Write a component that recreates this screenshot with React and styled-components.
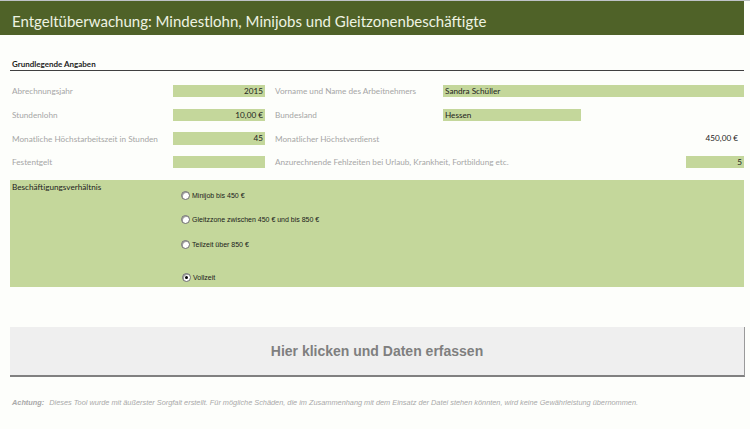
import React from "react";
import styled, { createGlobalStyle } from "styled-components";

const Global = createGlobalStyle`
  html, body { margin: 0; padding: 0; background: #fdfefb; }
  body { font-family: Lato, "Open Sans", sans-serif; }
  * { box-sizing: border-box; }
`;

const Page = styled.div`
  width: 750px;
  height: 429px;
  overflow: hidden;
  border-top: 1px solid #bfc3c8;
`;

const Header = styled.header`
  height: 34px;
  margin-right: 6px;
  background: #4f6228;
  display: flex;
  align-items: flex-end;
  padding: 0 0 5px 12px;
`;

const Title = styled.h1`
  margin: 0;
  font-family: Lato, sans-serif;
  font-weight: 400;
  font-size: 15px;
  line-height: 18px;
  color: #eef3e2;
`;

const Body = styled.main`
  padding: 0 6px 0 10px;
`;

const SectionTitle = styled.div`
  margin-top: 25px;
  height: 11px;
  border-bottom: 1px solid #404040;
  padding-left: 2px;
  font-size: 8px;
  font-weight: 700;
  line-height: 9px;
  color: #1e1e1e;
`;

const FormGrid = styled.div`
  margin-top: 14px;
  display: grid;
  grid-template-columns: 163px 92px 178px 1fr;
  grid-auto-rows: 12.3px;
  row-gap: 11.4px;
  column-gap: 0;
  align-items: center;
`;

const Label = styled.div`
  padding-left: ${(p) => (p.$indent ? "0" : "2px")};
  margin-left: ${(p) => (p.$indent ? "10px" : "0")};
  font-size: 8.2px;
  line-height: 12px;
  color: #a6a6a6;
  white-space: nowrap;
`;

const Field = styled.div`
  height: 12.3px;
  width: ${(p) => p.$width || "auto"};
  justify-self: ${(p) => (p.$end ? "end" : "stretch")};
  background: ${(p) => (p.$plain ? "transparent" : "#c4d79b")};
  text-align: ${(p) => p.$align || "left"};
  padding: 0 ${(p) => p.$padR || "2px"} 0 2px;
  font-size: 8.2px;
  line-height: 12.3px;
  color: #1d1d1d;
  white-space: nowrap;
`;

const Choice = styled.section`
  margin-top: 12px;
  height: 107px;
  background: #c4d79b;
  display: grid;
  grid-template-columns: 171px 1fr;
`;

const ChoiceLabel = styled.div`
  padding: 2px 0 0 2px;
  font-size: 8.2px;
  line-height: 10px;
  color: #1e1e1e;
`;

const RadioList = styled.div`
  display: flex;
  flex-direction: column;
  padding-top: 10px;
`;

const RadioItem = styled.label`
  display: flex;
  align-items: center;
  height: 10px;
  margin-top: ${(p) => p.$space || 0}px;
  margin-left: ${(p) => p.$shift || 0}px;
  font-family: "Liberation Sans", Arial, sans-serif;
  font-size: 7px;
  color: #1a1a1a;
  gap: 2px;
`;

const RadioDot = styled.span`
  width: 9px;
  height: 9px;
  border-radius: 50%;
  background: #ffffff;
  border: 1px solid #6d6d6d;
  box-shadow: inset 1px 1px 0 #a0a0a0;
  display: flex;
  align-items: center;
  justify-content: center;
  &::after {
    content: "";
    width: 3px;
    height: 3px;
    border-radius: 50%;
    background: ${(p) => (p.$checked ? "#000" : "transparent")};
  }
`;

const ActionButton = styled.button`
  display: flex;
  align-items: center;
  justify-content: center;
  margin-top: 40px;
  width: 735px;
  height: 50px;
  background: #efefef;
  border: none;
  border-right: 1px solid #9a9a9a;
  border-bottom: 2px solid #808080;
  font-family: "Liberation Sans", Arial, sans-serif;
  font-weight: 700;
  font-size: 14px;
  color: #7f7f7f;
  padding: 0;
  cursor: pointer;
`;

const Note = styled.p`
  margin: 21px 0 0 2px;
  font-family: "Liberation Sans", Arial, sans-serif;
  font-style: italic;
  font-size: 7.35px;
  color: #a9a9a9;
  white-space: nowrap;
  strong {
    font-weight: 700;
    margin-right: 3px;
  }
`;

const options = [
  { label: "Minijob bis 450 €", space: 0, shift: 0 },
  { label: "Gleitzzone zwischen 450 € und bis 850 €", space: 14, shift: 0 },
  { label: "Teilzeit über 850 €", space: 15, shift: 0 },
  { label: "Vollzeit", space: 23, shift: 1, checked: true },
];

export default function App() {
  return (
    <>
      <Global />
      <Page>
        <Header>
          <Title>Entgeltüberwachung: Mindestlohn, Minijobs und Gleitzonenbeschäftigte</Title>
        </Header>
        <Body>
          <SectionTitle>Grundlegende Angaben</SectionTitle>
          <FormGrid>
            <Label>Abrechnungsjahr</Label>
            <Field $align="right">2015</Field>
            <Label $indent>Vorname und Name des Arbeitnehmers</Label>
            <Field>Sandra Schüller</Field>

            <Label>Stundenlohn</Label>
            <Field $align="right">10,00 €</Field>
            <Label $indent>Bundesland</Label>
            <Field $width="138px">Hessen</Field>

            <Label>Monatliche Höchstarbeitszeit in Stunden</Label>
            <Field $align="right">45</Field>
            <Label $indent>Monatlicher Höchstverdienst</Label>
            <Field $plain $align="right" $padR="6px">450,00 €</Field>

            <Label>Festentgelt</Label>
            <Field $align="right"></Field>
            <Label $indent>Anzurechnende Fehlzeiten bei Urlaub, Krankheit, Fortbildung etc.</Label>
            <Field $width="58px" $end $align="right">5</Field>
          </FormGrid>

          <Choice>
            <ChoiceLabel>Beschäftigungsverhältnis</ChoiceLabel>
            <RadioList>
              {options.map((o) => (
                <RadioItem key={o.label} $space={o.space} $shift={o.shift}>
                  <RadioDot $checked={o.checked} />
                  {o.label}
                </RadioItem>
              ))}
            </RadioList>
          </Choice>

          <ActionButton>Hier klicken und Daten erfassen</ActionButton>

          <Note>
            <strong>Achtung:</strong> Dieses Tool wurde mit äußerster Sorgfalt erstellt. Für mögliche Schäden, die im Zusammenhang mit dem Einsatz der Datei stehen könnten, wird keine Gewährleistung übernommen.
          </Note>
        </Body>
      </Page>
    </>
  );
}
